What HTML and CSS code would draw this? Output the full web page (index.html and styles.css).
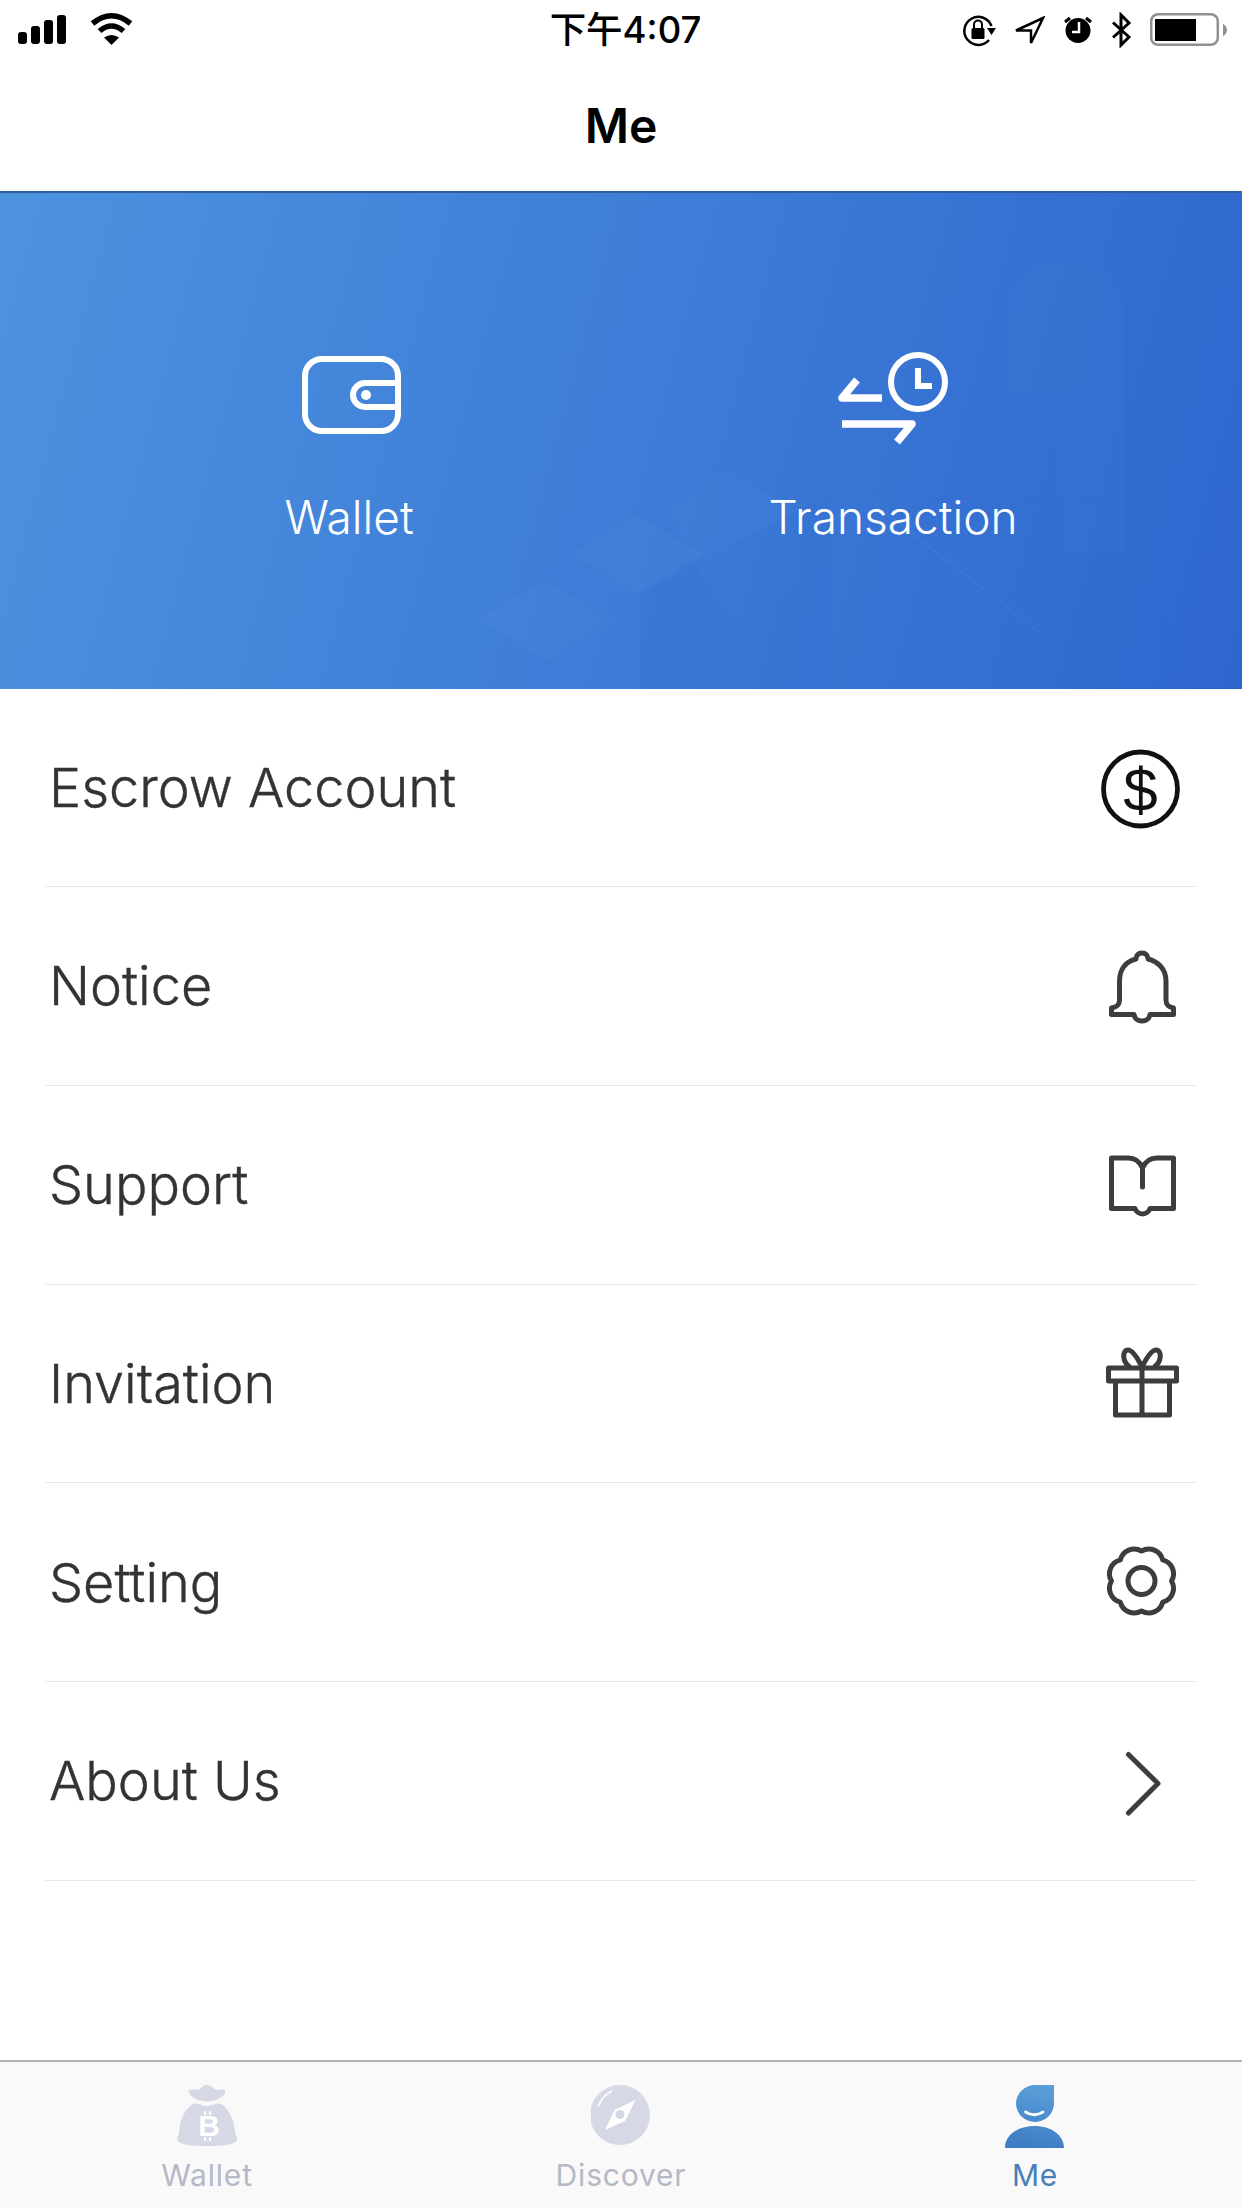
FILE: index.html
```html
<!DOCTYPE html>
<html lang="en">
<head>
    <meta charset="UTF-8">
    <meta name="viewport" content="width=device-width, initial-scale=1.0">
    <title>Me</title>
    <link rel="stylesheet" href="styles.css">
</head>
<body>
<div class="app">
    <div class="status-bar">
        <div class="status-left">
            <svg width="48" height="36" viewBox="0 0 48 36"><rect x="0" y="20" width="9" height="12" rx="3"/><rect x="13" y="14" width="9" height="18" rx="3"/><rect x="26" y="8" width="9" height="24" rx="3"/><rect x="39" y="3" width="9" height="29" rx="3"/></svg>
            <svg width="43" height="36" viewBox="0 0 43 36"><path d="M2.5 11.5Q21.5 -4 40.5 11.5M9.5 19Q21.5 9 33.500 19" fill="none" stroke="#000" stroke-width="5.500"/><path d="M14 25.500Q21.500 20.500 29 25.500L21.500 33Z"/></svg>
        </div>
        <div class="status-time">下午4:07</div>
        <div class="status-right">
            <svg width="34" height="36" viewBox="0 0 34 36"><path d="M29.500 14A14 14 0 1 0 27 28" fill="none" stroke="#000" stroke-width="2.500"/><path d="M25 16H34L29.500 23Z"/><rect x="9.500" y="16" width="13" height="11" rx="1.500"/><path d="M12 16V12.500A4 4 0 0 1 20 12.500V16" fill="none" stroke="#000" stroke-width="2"/></svg>
            <svg width="31" height="36" viewBox="0 0 31 36"><path d="M29 6L2 18.500H17V31Z" fill="none" stroke="#000" stroke-width="2.500"/></svg>
            <svg width="30" height="36" viewBox="0 0 30 36"><circle cx="15" cy="18.500" r="12.500"/><path d="M16 10V20H9" fill="none" stroke="#fff" stroke-width="2.500"/><path d="M2 10L7 6M28 10L23 6" fill="none" stroke="#000" stroke-width="3"/></svg>
            <svg width="21" height="36" viewBox="0 0 21 36"><path d="M2 10.500L18 25L10 33V3L18 11L2 25.500" fill="none" stroke="#000" stroke-width="3"/></svg>
            <svg width="77" height="36" viewBox="0 0 77 36"><rect x="1.200" y="2.200" width="66.600" height="30.600" rx="7" fill="none" stroke="#919191" stroke-width="2.500"/><rect x="5" y="7" width="41" height="22"/><path d="M73 12C75.500 13 77 15.500 77 18C77 20.500 75.500 23 73 24Z" fill="#919191"/></svg>
        </div>
    </div>
    <div class="nav-bar">Me</div>

    <div class="hero">
        <svg class="hero-decor" width="1242" height="496" viewBox="0 0 1242 496">
            <path d="M729 278L794 316V392L729 430L665 316Z" fill="#5a9de0" opacity=".09"/>
            <path d="M634 320L703 361L634 402L572 361Z" fill="#5a9de0" opacity=".12"/>
            <path d="M547 388L612 428L547 468L478 425Z" fill="#5a9de0" opacity=".12"/>
            <path d="M640 400L830 300V496H640Z" fill="#2c62cc" opacity=".1"/>
            <path d="M1008 130C1008 85 1040 65 1066 65C1095 65 1125 85 1125 130V360H1060V200H1008Z" fill="#5a9de0" opacity=".05"/>
            <path d="M860 300L1040 440" stroke="#5a9de0" stroke-width="2" opacity=".14"/>
            <path d="M900 310H1164V460" stroke="#2c62cc" stroke-width="2" fill="none" opacity=".12"/>
        </svg>
        <div class="hero-item">
            <svg class="hero-icon" width="120" height="100" viewBox="0 0 120 100"><rect x="16" y="9" width="93" height="72" rx="17" fill="none" stroke="#fff" stroke-width="6"/><path d="M109 33H76A12 12 0 0 0 76 57H109" fill="none" stroke="#fff" stroke-width="6"/><circle cx="77" cy="45" r="5" fill="#fff"/></svg>
            <div class="hero-label">Wallet</div>
        </div>
        <div class="hero-item">
            <svg class="hero-icon" width="120" height="100" viewBox="0 0 120 100"><circle cx="85" cy="32" r="27" fill="none" stroke="#fff" stroke-width="6"/><path d="M85 18V36H99" fill="none" stroke="#fff" stroke-width="6"/><path d="M49 48H9L24 30" fill="none" stroke="#fff" stroke-width="7.500" stroke-linejoin="round"/><path d="M9 74H79L64 92" fill="none" stroke="#fff" stroke-width="7.500" stroke-linejoin="round"/></svg>
            <div class="hero-label">Transaction</div>
        </div>
    </div>

    <div class="menu">
        <div class="menu-row">
            <span class="menu-label">Escrow Account</span>
            <svg class="menu-icon" width="80" height="80" viewBox="0 0 80 80"><circle cx="39.500" cy="41" r="37" fill="none" stroke="#111" stroke-width="4.800"/><text class="dollar" x="39.500" y="63" text-anchor="middle">$</text></svg>
        </div>
        <div class="menu-row">
            <span class="menu-label">Notice</span>
            <svg class="menu-icon" width="80" height="80" viewBox="0 0 80 80"><path d="M35 13C35 9 37.500 7 41 7C44.500 7 47 9 47 13C57 15.500 65 23 65 35V54C65 59 67 61 72.500 62V68.500H49C48.500 72.500 45 75 41 75C37 75 33.500 72.500 33 68.500H10.500V62C16 61 18.500 59 18.500 54V35C18.500 23 25 15.500 35 13Z" fill="none" stroke="#3d3d3d" stroke-width="5" stroke-linejoin="round"/></svg>
        </div>
        <div class="menu-row">
            <span class="menu-label">Support</span>
            <svg class="menu-icon" width="80" height="80" viewBox="0 0 80 80"><path d="M10.500 13H27C34 13 39 17 41.500 23C44 17 49 13 56 13H72.500V63.500H49C48 66.500 45 69 41.500 69C38 69 35 66.500 34 63.500H10.500ZM41.500 23V42" fill="none" stroke="#3d3d3d" stroke-width="5" stroke-linejoin="round" stroke-linecap="round"/></svg>
        </div>
        <div class="menu-row">
            <span class="menu-label">Invitation</span>
            <svg class="menu-icon" width="80" height="80" viewBox="0 0 80 80"><path d="M7.500 25H75.500V38H7.500ZM14.500 38V72H68.500V38M41 25V72M41 24C36 14 31 7 27 7C21 7 21 19 29 24M41 24C46 14 51 7 55 7C61 7 61 19 53 24" fill="none" stroke="#3d3d3d" stroke-width="5" stroke-linejoin="round"/></svg>
        </div>
        <div class="menu-row">
            <span class="menu-label">Setting</span>
            <svg class="menu-icon" width="80" height="80" viewBox="0 0 80 80"><g transform="translate(0.500 -1)" fill="none" stroke="#3d3d3d" stroke-width="5" stroke-linejoin="round"><path d="M70 40A14.300 14.300 0 0 1 61.200 61.200A14.300 14.300 0 0 1 40 70A14.300 14.300 0 0 1 18.800 61.200A14.300 14.300 0 0 1 10 40A14.300 14.300 0 0 1 18.800 18.800A14.300 14.300 0 0 1 40 10A14.300 14.300 0 0 1 61.200 18.800A14.300 14.300 0 0 1 70 40Z"/><circle cx="40" cy="40" r="13.500"/></g></svg>
        </div>
        <div class="menu-row">
            <span class="menu-label">About Us</span>
            <svg class="menu-icon" width="80" height="80" viewBox="0 0 80 80"><path d="M27.500 13.500L57 42.500L27.500 72" fill="none" stroke="#3d3d3d" stroke-width="5" stroke-linecap="round" stroke-linejoin="round"/></svg>
        </div>
    </div>

    <div class="tab-bar">
        <div class="tab">
            <svg class="tab-icon" width="61" height="64" viewBox="0 0 61 64"><path d="M12 6C15 4 20 8 24 4C27 0 33 0 36 4C40 8 45 4 48 6C49 12 41 17 30 17.500C19 17 11 12 12 6Z" fill="#d6d8e5"/><path d="M16 20C20 18 24 22 30 22C36 22 40 18 44 20C52 24 58 38 58 50C60 52 60.500 54 60 56C58 61 46 62 30 62C14 62 2 61 0.500 56C0 54 0.500 52 2 50C2 38 8 24 16 20Z" fill="#d6d8e5"/><text class="bitcoin" x="32" y="52" text-anchor="middle">B</text><path d="M28 27V31M33 27V31M28 53V57M33 53V57" stroke="#fff" stroke-width="2"/></svg>
            <span class="tab-label">Wallet</span>
        </div>
        <div class="tab">
            <svg class="tab-icon" width="60" height="64" viewBox="1 0 60 64"><circle cx="30" cy="31" r="30" fill="#d6d8e5"/><path d="M45.500 16L35 37L15 46L24.500 26Z" fill="#fff"/><circle cx="30" cy="30.500" r="4.500" fill="#d6d8e5"/><path d="M8 23C11 15 15 10 22 7" fill="none" stroke="#fff" stroke-width="1.500" stroke-dasharray="24 2 2 30"/></svg>
            <span class="tab-label">Discover</span>
        </div>
        <div class="tab tab-active">
            <svg class="tab-icon" width="60" height="64" viewBox="0 0 60 64">
                <defs><linearGradient id="meGrad" x1="0.600" y1="0" x2="0.400" y2="1"><stop offset="0" stop-color="#5a9fd9"/><stop offset="1" stop-color="#3f7cc4"/></linearGradient></defs>
                <path d="M30 1H49V19.500A19 18.500 0 1 1 30 1ZM0 64C0 51 13 42 29.500 42C46 42 59 51 59 64Z" fill="url(#meGrad)"/>
                <path d="M20.500 28Q29 33.500 38 28" fill="none" stroke="#fff" stroke-width="2.800" stroke-linecap="round"/>
            </svg>
            <span class="tab-label">Me</span>
        </div>
    </div>
</div>
</body>
</html>
```

FILE: styles.css
```css
body {
    margin: 0;
    padding: 0;
    background-color: #fff;
    font-family: "Inter", "Noto Sans CJK SC", sans-serif;
}
.app {
    width: 1242px;
    height: 2208px;
    display: flex;
    flex-direction: column;
    overflow: hidden;
}
.status-bar {
    display: grid;
    grid-template-columns: 1fr auto 1fr;
    height: 62px;
    box-sizing: border-box;
    padding: 12px 15px 0 18px;
}
.status-left {
    display: flex;
    gap: 24px;
    align-items: flex-start;
}
.status-time {
    margin-left: 6px;
    font-size: 36.5px;
    font-weight: 500;
    line-height: 36px;
    color: #000;
}
.status-right {
    display: flex;
    gap: 18px;
    justify-content: flex-end;
    align-items: flex-start;
}
.nav-bar {
    height: 131px;
    box-sizing: border-box;
    border-bottom: 2px solid #2f5f9f;
    text-align: center;
    font-size: 48px;
    font-weight: 600;
    line-height: 128px;
    color: #000;
}
.hero {
    position: relative;
    height: 496px;
    box-sizing: border-box;
    padding-top: 157px;
    display: flex;
    justify-content: center;
    background: linear-gradient(105deg, #4d93de 0%, #3f7fd8 45%, #2e66ce 100%);
}
.hero-decor {
    position: absolute;
    left: 0;
    top: 0;
}
.hero-item {
    position: relative;
    width: 544px;
    display: flex;
    flex-direction: column;
    align-items: center;
}
.hero-icon {
    display: block;
}
.hero-label {
    margin-top: 39px;
    font-size: 46px;
    font-weight: 300;
    line-height: 56px;
    color: #fff;
}
.menu {
    flex: 1;
    padding: 0 45px;
}
.menu-row {
    height: 198.75px;
    box-sizing: border-box;
    border-bottom: 1px solid #e8e8e8;
    display: flex;
    align-items: center;
    justify-content: space-between;
    padding: 0 16px 0 4px;
}
.menu-row:first-child {
    height: 198px;
}
.menu-label {
    font-size: 54px;
    font-weight: 300;
    color: #333;
    -webkit-text-stroke: 0.4px #333;
}
.menu-icon {
    display: block;
    overflow: visible;
}
.dollar {
    font-family: "Liberation Sans", sans-serif;
    font-size: 62px;
    fill: #111;
}
.tab-bar {
    height: 148px;
    box-sizing: border-box;
    border-top: 2px solid #b3b3b3;
    background-color: #f9f9f9;
    display: flex;
}
.tab {
    flex: 1;
    display: flex;
    flex-direction: column;
    align-items: center;
    padding-top: 22px;
}
.tab-icon {
    display: block;
}
.bitcoin {
    font-family: "Liberation Sans", sans-serif;
    font-size: 30px;
    font-weight: 700;
    fill: #fff;
}
.tab-label {
    margin-top: 9px;
    font-size: 30px;
    line-height: 36px;
    letter-spacing: 0.8px;
    color: #b5b8c6;
}
.tab-active .tab-label {
    color: #4a7fba;
}
```
